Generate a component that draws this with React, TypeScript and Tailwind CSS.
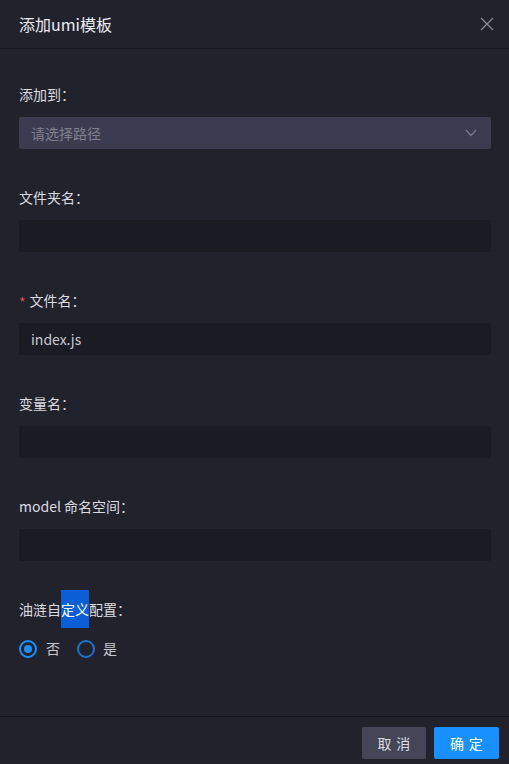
import { useState } from "react"

const font = { fontFamily: '"Noto Sans CJK SC", "Noto Sans", sans-serif' }

function Field({ label, required, children }: { label: React.ReactNode; required?: boolean; children: React.ReactNode }) {
  return (
    <div className="mb-[37px]">
      <div className="h-[22px] leading-[22px] mb-[12px] text-[14px] text-[#dcdce0] flex items-center">
        {required && <span className="text-[#e5484d] mr-[4px] text-[14px] leading-none pt-[3px]">*</span>}
        {label}
      </div>
      {children}
    </div>
  )
}

export default function App() {
  const [custom, setCustom] = useState(false)

  return (
    <div className="w-[509px] h-[764px] bg-[#22222d] flex flex-col" style={font}>
      {/* Header */}
      <div className="h-[49px] shrink-0 border-b border-[#16161c] flex items-center justify-between pl-[19px] pr-[15px]">
        <span className="text-[16px] text-[#ececf0]">添加umi模板</span>
        <svg width="14" height="14" viewBox="0 0 14 14" className="text-[#8c8c96]">
          <path d="M1 1 L13 13 M13 1 L1 13" stroke="currentColor" strokeWidth="1.3" />
        </svg>
      </div>

      {/* Body */}
      <div className="flex-1 pl-[19px] pr-[18px] pt-[34px]">
        <Field label="添加到：">
          <div className="h-[32px] bg-[#3c3b4f] rounded-[2px] flex items-center justify-between pl-[12px] pr-[14px]">
            <span className="text-[14px] text-[#80808f]">请选择路径</span>
            <svg width="12" height="8" viewBox="0 0 12 8" className="text-[#7c7b8e]">
              <path d="M1 1 L6 6.5 L11 1" stroke="currentColor" strokeWidth="1.2" fill="none" />
            </svg>
          </div>
        </Field>

        <Field label="文件夹名：">
          <div className="h-[32px] bg-[#1b1b23] rounded-[2px]" />
        </Field>

        <Field label="文件名：" required>
          <div className="h-[32px] bg-[#1b1b23] rounded-[2px] flex items-center pl-[12px] text-[14px] text-[#c8c8cf]">index.js</div>
        </Field>

        <Field label="变量名：">
          <div className="h-[32px] bg-[#1b1b23] rounded-[2px]" />
        </Field>

        <Field label="model 命名空间：">
          <div className="h-[32px] bg-[#1b1b23] rounded-[2px]" />
        </Field>

        <div>
          <div className="h-[22px] leading-[22px] text-[14px] text-[#dcdce0]">
            油涟自<span className="bg-[#0b5fd6] text-white py-[9px]">定义</span>配置：
          </div>
          <div className="mt-[18px] flex items-center text-[14px] text-[#c8c8cf]">
            <button className="flex items-center" onClick={() => setCustom(false)}>
              <span className="w-[18px] h-[18px] rounded-full border-2 border-[#1890ff] flex items-center justify-center">
                {!custom && <span className="w-[8px] h-[8px] rounded-full bg-[#1890ff]" />}
              </span>
              <span className="ml-[9px]">否</span>
            </button>
            <button className="flex items-center ml-[17px]" onClick={() => setCustom(true)}>
              <span className="w-[18px] h-[18px] rounded-full border-2 border-[#1a73cf] flex items-center justify-center">
                {custom && <span className="w-[8px] h-[8px] rounded-full bg-[#1890ff]" />}
              </span>
              <span className="ml-[8px]">是</span>
            </button>
          </div>
        </div>
      </div>

      {/* Footer */}
      <div className="h-[48px] shrink-0 border-t border-[#16161c] flex justify-end items-start gap-[8px] pt-[10px] pr-[10px]">
        <button className="w-[64px] h-[32px] rounded-[2px] bg-[#454558] text-[14px] text-[#dcdce0]">
          <span className="tracking-[0.34em] mr-[-0.34em]">取消</span>
        </button>
        <button className="w-[65px] h-[32px] rounded-[2px] bg-[#1890ff] text-[14px] text-white">
          <span className="tracking-[0.34em] mr-[-0.34em]">确定</span>
        </button>
      </div>
    </div>
  )
}
